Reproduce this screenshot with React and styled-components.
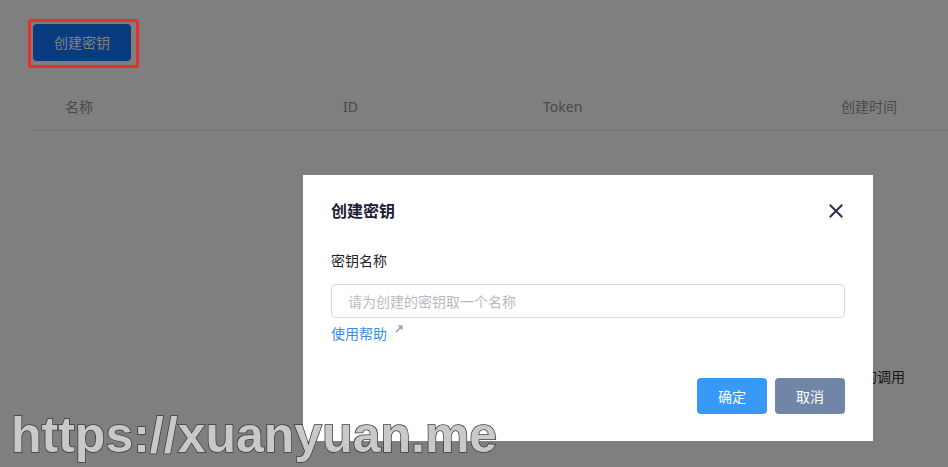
import React from 'react';
import styled, { createGlobalStyle } from 'styled-components';

const GlobalStyle = createGlobalStyle`
    * { box-sizing: border-box; }
    html, body {
        margin: 0;
        padding: 0;
        background: #ffffff;
        font-family: "Noto Sans", "Noto Sans CJK SC", sans-serif;
        font-size: 14px;
        color: #1f2329;
        overflow: hidden;
    }
`;

const Page = styled.div`
    position: relative;
    width: 948px;
    height: 467px;
    padding: 24px 0 0 32px;
`;

const Toolbar = styled.div`
    display: flex;
    padding-left: 1px;
`;

const PrimaryButton = styled.button`
    width: 98px;
    height: 37px;
    border: none;
    border-radius: 4px;
    background: #1278ff;
    color: #ffffff;
    font-family: inherit;
    font-size: 14px;
    line-height: 20px;
    padding: 0;
`;

const Table = styled.div`
    margin-top: 23px;
`;

const HeaderRow = styled.div`
    display: grid;
    grid-template-columns: 278px 200px 298px 1fr;
    height: 47px;
    align-items: center;
    border-bottom: 1px solid #e2e2e2;
`;

const HeaderCell = styled.div`
    padding-left: 33px;
    color: #919399;
    font-size: 14px;
    line-height: 20px;
`;

const BodyNote = styled.div`
    display: flex;
    justify-content: flex-end;
    padding: 236px 43px 0 0;
    color: #2e2e2e;
    font-size: 14px;
    line-height: 20px;
`;

const Mask = styled.div`
    position: absolute;
    inset: 0;
    background: rgba(0, 0, 0, 0.5);
    z-index: 10;
`;

const Highlight = styled.div`
    position: absolute;
    left: 28px;
    top: 19px;
    width: 111px;
    height: 49px;
    border: 3px solid #e8302a;
    border-radius: 2px;
    z-index: 20;
`;

const Modal = styled.div`
    position: absolute;
    left: 303px;
    top: 175px;
    width: 570px;
    height: 266px;
    background: #ffffff;
    padding: 24px 28px 27px;
    display: flex;
    flex-direction: column;
`;

const ModalHeader = styled.div`
    display: flex;
    align-items: center;
    justify-content: space-between;
    height: 24px;
`;

const ModalTitle = styled.div`
    font-size: 16px;
    font-weight: 700;
    line-height: 24px;
    color: #1d2033;
`;

const CloseButton = styled.button`
    border: none;
    background: none;
    padding: 0;
    margin-right: 2px;
    width: 14px;
    height: 14px;
    display: flex;
`;

const FieldLabel = styled.div`
    margin-top: 27px;
    font-size: 14px;
    line-height: 22px;
    color: #1f2329;
`;

const Input = styled.input`
    margin-top: 12px;
    width: 100%;
    height: 34px;
    border: 1px solid #d8dce2;
    border-radius: 4px;
    padding: 0 16px;
    font-family: inherit;
    font-size: 14px;
    outline: none;
    &::placeholder { color: #b6bac1; }
`;

const HelpLink = styled.a`
    margin-top: 6px;
    display: inline-flex;
    align-items: flex-start;
    align-self: flex-start;
    color: #3a8ee6;
    font-size: 14px;
    line-height: 20px;
    text-decoration: none;
    svg { margin: 1px 0 0 8px; }
`;

const Footer = styled.div`
    margin-top: auto;
    display: flex;
    justify-content: flex-end;
    gap: 8px;
`;

const FooterButton = styled.button`
    width: 70px;
    height: 36px;
    border: none;
    border-radius: 4px;
    background: ${p => (p.$cancel ? '#7186a7' : '#3899f7')};
    color: #ffffff;
    font-family: inherit;
    font-size: 14px;
    padding: 0;
`;

const Watermark = styled.div`
    position: absolute;
    left: 11px;
    top: 410px;
    z-index: 30;
    font-family: "Liberation Sans", Arial, sans-serif;
    font-weight: 700;
    font-size: 50px;
    line-height: 50px;
    letter-spacing: 0;
    color: #c9c9c9;
    -webkit-text-stroke: 1.5px #3c3c3c;
    paint-order: stroke fill;
`;

const CloseIcon = () => (
    <svg width="14" height="14" viewBox="0 0 14 14">
        <path d="M1.5 1.5 L12.5 12.5 M12.5 1.5 L1.5 12.5" stroke="#2d3148" strokeWidth="2" strokeLinecap="square" />
    </svg>
);

const OutIcon = () => (
    <svg width="8" height="8" viewBox="0 0 8 8">
        <path d="M1 7 L6 2" stroke="#9aa0a8" strokeWidth="1.6" />
        <path d="M2.5 0.5 H7.5 V5.5 Z" fill="#9aa0a8" />
    </svg>
);

export default function App() {
    return (
        <>
            <GlobalStyle />
            <Page>
                <Toolbar>
                    <PrimaryButton>创建密钥</PrimaryButton>
                </Toolbar>
                <Table>
                    <HeaderRow>
                        <HeaderCell>名称</HeaderCell>
                        <HeaderCell>ID</HeaderCell>
                        <HeaderCell>Token</HeaderCell>
                        <HeaderCell>创建时间</HeaderCell>
                    </HeaderRow>
                    <BodyNote>密钥用于接口的调用</BodyNote>
                </Table>

                <Mask>
                    <Modal>
                        <ModalHeader>
                            <ModalTitle>创建密钥</ModalTitle>
                            <CloseButton aria-label="关闭"><CloseIcon /></CloseButton>
                        </ModalHeader>
                        <FieldLabel>密钥名称</FieldLabel>
                        <Input placeholder="请为创建的密钥取一个名称" />
                        <HelpLink href="#">使用帮助<OutIcon /></HelpLink>
                        <Footer>
                            <FooterButton>确定</FooterButton>
                            <FooterButton $cancel>取消</FooterButton>
                        </Footer>
                    </Modal>
                </Mask>
                <Highlight />
                <Watermark>https://xuanyuan.me</Watermark>
            </Page>
        </>
    );
}
